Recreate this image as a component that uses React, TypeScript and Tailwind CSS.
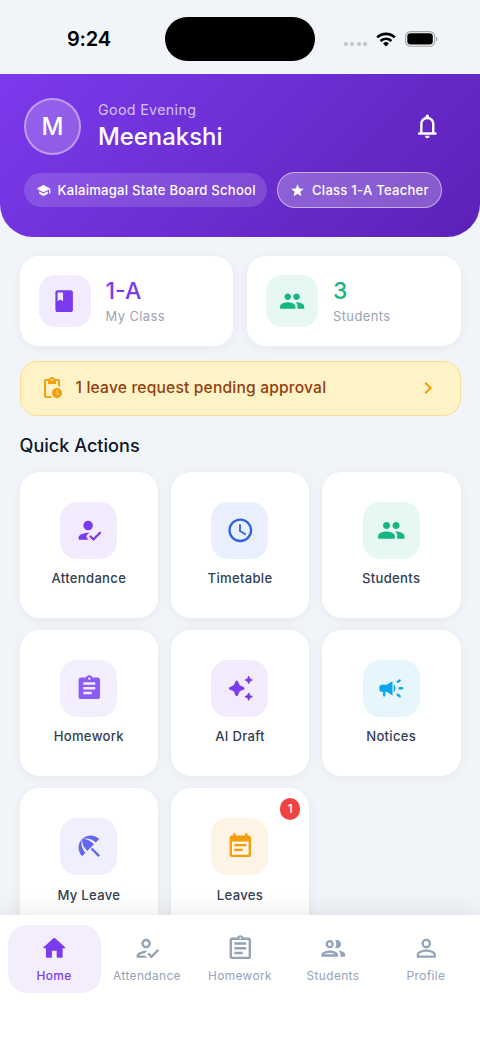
import React from "react";
import type { IconType } from "react-icons";
import {
    MdAssignment,
    MdBeachAccess,
    MdChevronRight,
    MdClass,
    MdEventNote,
    MdOutlineAssignment,
    MdOutlineGroup,
    MdOutlineHowToReg,
    MdPendingActions,
    MdPeople,
    MdPersonOutline,
    MdSchedule,
    MdStar,
} from "react-icons/md";

interface IconProps {
    className?: string;
}

type Icon = IconType | React.FC<IconProps>;

interface Action {
    label: string;
    icon: Icon;
    tint: string;
    badge?: number;
}

function HomeIcon({ className }: IconProps) {
    return (
        <svg className={className} viewBox="0 0 24 24" fill="currentColor">
            <path d="M10 19v-5h4v5c0 .55.45 1 1 1h3c.55 0 1-.45 1-1v-7h1.7c.46 0 .68-.57.33-.87L12.67 3.6c-.38-.34-.96-.34-1.34 0l-8.36 7.53c-.34.3-.13.87.33.87H5v7c0 .55.45 1 1 1h3c.55 0 1-.45 1-1z" />
        </svg>
    );
}

function SchoolIcon({ className }: IconProps) {
    return (
        <svg className={className} viewBox="0 0 24 24" fill="currentColor">
            <path d="M5 13.18v2.81c0 .73.4 1.41 1.04 1.76l5 2.73c.6.33 1.32.33 1.92 0l5-2.73c.64-.35 1.04-1.03 1.04-1.76v-2.81l-6.04 3.3c-.6.33-1.32.33-1.92 0L5 13.18zm6.04-9.66l-8.43 4.6c-.69.38-.69 1.38 0 1.76l8.43 4.6c.6.33 1.32.33 1.92 0L21 10.09V16c0 .55.45 1 1 1s1-.45 1-1V9.59c0-.37-.2-.7-.52-.88l-9.52-5.19c-.6-.32-1.32-.32-1.92 0z" />
        </svg>
    );
}

function BellIcon({ className }: IconProps) {
    return (
        <svg className={className} viewBox="0 0 24 24" fill="none" stroke="currentColor" strokeWidth="2">
            <path d="M7 18v-8a5 5 0 0 1 10 0v8" />
            <path d="M5.2 18h13.6" strokeLinecap="round" />
            <path d="M12 3.6v1" strokeWidth="2.8" strokeLinecap="round" />
            <path d="M10 20h4a2 2 0 0 1-4 0z" fill="currentColor" stroke="none" />
        </svg>
    );
}

function CheckUserIcon({ className }: IconProps) {
    return (
        <svg className={className} viewBox="0 0 24 24" fill="currentColor">
            <circle cx="11" cy="8" r="4" />
            <path d="M11 14c-2.67 0-8 1.34-8 4v1c0 .55.45 1 1 1h7.6l-1.4-1.4a2 2 0 0 1 0-2.8L12 14.06z" />
            <path d="M13 17.2l2.5 2.4 5.5-5.5" fill="none" stroke="currentColor" strokeWidth="1.9" strokeLinecap="round" />
        </svg>
    );
}

function SparkleIcon({ className }: IconProps) {
    return (
        <svg className={className} viewBox="0 0 24 24" fill="currentColor">
            <path d="M19.46 8l.79-1.75L22 5.46c.39-.18.39-.73 0-.91l-1.75-.79L19.46 2c-.18-.39-.73-.39-.91 0l-.79 1.75L16 4.54c-.39.18-.39.73 0 .91l1.75.79L18.54 8c.18.39.74.39.92 0zM11.5 9.5L9.91 6c-.35-.78-1.47-.78-1.82 0L6.5 9.5 3 11.09c-.78.36-.78 1.47 0 1.82l3.5 1.59L8.09 18c.36.78 1.47.78 1.82 0l1.59-3.5 3.5-1.59c.78-.36.78-1.47 0-1.82L11.5 9.5zM18.54 16l-.79 1.75-1.75.79c-.39.18-.39.73 0 .91l1.75.79.79 1.76c.18.39.73.39.91 0l.79-1.75 1.76-.79c.39-.18.39-.73 0-.91l-1.75-.79-.79-1.76c-.18-.39-.74-.39-.92 0z" />
        </svg>
    );
}

function CampaignIcon({ className }: IconProps) {
    return (
        <svg className={className} viewBox="0 0 24 24" fill="currentColor">
            <path d="M8 9H4c-1.1 0-2 .9-2 2v2c0 1.1.9 2 2 2h1v3c0 .55.45 1 1 1s1-.45 1-1v-3h1l5 3V6L8 9zM15.5 12c0-1.33-.58-2.53-1.5-3.35v6.69c.92-.81 1.5-2.01 1.5-3.34z" />
            <path d="M19 12h2M17.4 17.4l1.6 1.2M17.4 6.6L19 5.4" fill="none" stroke="currentColor" strokeWidth="2" strokeLinecap="round" />
        </svg>
    );
}

const actions: Action[] = [
    { label: "Attendance", icon: CheckUserIcon, tint: "bg-[#f2ebfd] text-[#7c3aed]" },
    { label: "Timetable", icon: MdSchedule, tint: "bg-[#e9effd] text-[#2f62e3]" },
    { label: "Students", icon: MdPeople, tint: "bg-[#e7f7f1] text-[#17b681]" },
    { label: "Homework", icon: MdAssignment, tint: "bg-[#f3effe] text-[#8b5cf6]" },
    { label: "AI Draft", icon: SparkleIcon, tint: "bg-[#f2ebfd] text-[#7c3aed]" },
    { label: "Notices", icon: CampaignIcon, tint: "bg-[#e7f6fd] text-[#0ea5e9]" },
    { label: "My Leave", icon: MdBeachAccess, tint: "bg-[#efeffe] text-[#6366f1]" },
    { label: "Leaves", icon: MdEventNote, tint: "bg-[#fef4e6] text-[#f59e0b]", badge: 1 },
];

const tabs: { label: string; icon: Icon }[] = [
    { label: "Home", icon: HomeIcon },
    { label: "Attendance", icon: MdOutlineHowToReg },
    { label: "Homework", icon: MdOutlineAssignment },
    { label: "Students", icon: MdOutlineGroup },
    { label: "Profile", icon: MdPersonOutline },
];

function StatusBar() {
    return (
        <div className="h-[74px] shrink-0 flex items-start pt-[16.5px]">
            <div className="w-[165px] h-[44px] flex items-center pl-[67px] text-[20px] font-semibold tracking-[-0.2px] text-black">9:24</div>
            <div className="w-[150px] h-[44px] rounded-full bg-black"></div>
            <div className="flex-1 h-[45px] flex items-center pl-[29px]">
                <div className="flex gap-[2.4px] mt-[10px]">
                    {[0, 1, 2, 3].map((i) => (
                        <span key={i} className="w-1 h-1 rounded-full bg-[#c0c3c6]"></span>
                    ))}
                </div>
                <svg className="ml-[9px] w-5 h-[15px]" viewBox="0 0 20 15" fill="none" stroke="#000" strokeWidth="2.7">
                    <path d="M1.2 5.4a12.6 12.6 0 0 1 17.6 0" />
                    <path d="M4.5 9a7.9 7.9 0 0 1 11 0" />
                    <path d="M10 14.5l-2.9-3a4.2 4.2 0 0 1 5.8 0z" fill="#000" stroke="none" />
                </svg>
                <svg className="ml-[9px] w-[33px] h-4" viewBox="0 0 33 16">
                    <rect x=".6" y=".6" width="29" height="14.6" rx="4.8" fill="none" stroke="#a3a6a9" strokeWidth="1.1" />
                    <rect x="2.3" y="2.3" width="25.5" height="11.2" rx="3.3" />
                    <path d="M31 5.5c2 .8 2 4 0 4.8z" fill="#a3a6a9" />
                </svg>
            </div>
        </div>
    );
}

function Header() {
    return (
        <div className="h-[162.5px] shrink-0 rounded-b-[33px] bg-[linear-gradient(135deg,#7c3aed,#5b21b6)] px-6 pt-6 text-white">
            <div className="flex items-center">
                <div className="w-[57px] h-[57px] rounded-full bg-white/20 border-2 border-white/40 flex items-center justify-center text-2xl font-medium">
                    M
                </div>
                <div className="ml-[17px] flex-1">
                    <p className="text-[14.3px] leading-[18px] tracking-[0.32px] text-white/70">Good Evening</p>
                    <h1 className="mt-[2px] text-[23.9px] leading-[32px] font-medium">Meenakshi</h1>
                </div>
                <BellIcon className="mr-[14.5px] w-[28.6px] h-[28.6px]" />
            </div>
            <div className="mt-[17px] flex items-center gap-[10px] text-[13.1px] font-medium tracking-[0.24px] whitespace-nowrap">
                <div className="h-[34px] w-[243px] rounded-full bg-white/15 flex items-center pl-3">
                    <SchoolIcon className="w-[15px] h-[15px] mr-[6.5px]" />
                    <span className="pt-[2px]">Kalaimagal State Board School</span>
                </div>
                <div className="h-9 w-[165px] rounded-full bg-white/25 border border-white/50 flex items-center pl-3">
                    <MdStar className="w-[15px] h-[15px] mr-[7px]" />
                    <span className="pt-[2px]">Class 1-A Teacher</span>
                </div>
            </div>
        </div>
    );
}

interface StatProps {
    value: string;
    label: string;
    icon: Icon;
    tint: string;
    color: string;
}

function StatCard({ value, label, icon: Icon, tint, color }: StatProps) {
    return (
        <div className="h-[90.5px] rounded-[19px] bg-white shadow-[0_2px_12px_rgba(0,0,0,0.05)] flex items-center pl-[19px]">
            <div className={`w-[52px] h-[52px] rounded-[16px] flex items-center justify-center ${tint}`}>
                <Icon className="w-[26.3px] h-[26.3px]" />
            </div>
            <div className="ml-[15px]">
                <p className={`text-[23px] leading-[28px] font-medium ${color}`}>{value}</p>
                <p className="mt-[3px] text-[12.9px] leading-[18px] tracking-[0.44px] text-[#9ca3b5]">{label}</p>
            </div>
        </div>
    );
}

function ActionCard({ label, icon: Icon, tint, badge }: Action) {
    return (
        <div className="relative h-[146px] rounded-[20px] bg-white shadow-[0_2px_12px_rgba(0,0,0,0.05)] flex flex-col items-center pt-[30px]">
            <div className={`w-[57px] h-[57px] rounded-[17px] flex items-center justify-center ${tint}`}>
                <Icon className="w-[28.6px] h-[28.6px]" />
            </div>
            <p className="mt-[9.7px] text-[13.1px] leading-[20px] font-medium tracking-[0.3px] text-[#334155]">{label}</p>
            {badge && (
                <span className="absolute top-[10px] right-[9px] w-5 h-[22px] rounded-full bg-[#ef4444] text-white text-[12px] font-medium flex items-center justify-center">
                    {badge}
                </span>
            )}
        </div>
    );
}

export default function App() {
    return (
        <div className="w-[480px] h-[1043px] overflow-hidden flex flex-col bg-[#f1f5f9] font-[Inter,sans-serif]">
            <StatusBar />
            <Header />

            {/* CONTENT */}
            <div className="flex-1 min-h-0 overflow-hidden px-[19.5px] pt-[19.3px]">
                <div className="grid grid-cols-2 gap-[14px]">
                    <StatCard value="1-A" label="My Class" icon={MdClass} tint="bg-[#f2ebfd] text-[#7c3aed]" color="text-[#7c3aed]" />
                    <StatCard value="3" label="Students" icon={MdPeople} tint="bg-[#e7f7f1] text-[#17b681]" color="text-[#17b681]" />
                </div>

                <div className="mt-[14.4px] h-[55px] rounded-[17px] bg-[#fef3c7] border-[1.5px] border-[#fbdc90] flex items-center pl-[19.5px] pr-[19.5px]">
                    <MdPendingActions className="w-6 h-6 text-[#f59e0b]" />
                    <p className="ml-[11.5px] flex-1 text-[15.6px] font-medium tracking-[0.18px] text-[#92400e]">1 leave request pending approval</p>
                    <MdChevronRight className="w-6 h-6 text-[#f59e0b]" />
                </div>

                <h2 className="mt-[16px] text-[18.1px] leading-[26px] font-medium text-[#0f172a]">Quick Actions</h2>

                <div className="mt-[13.9px] grid grid-cols-3 gap-x-[12.5px] gap-y-[12.2px]">
                    {actions.map((action) => (
                        <ActionCard key={action.label} {...action} />
                    ))}
                </div>
            </div>

            {/* BOTTOM NAV */}
            <div className="relative h-[128px] shrink-0 bg-white shadow-[0_-4px_24px_rgba(0,0,0,0.08)] px-[7.5px] pt-[9.5px] grid grid-cols-5">
                {tabs.map(({ label, icon: Icon }, i) => (
                    <div
                        key={label}
                        className={`h-[68px] rounded-[19px] flex flex-col items-center pt-[9.5px] ${i === 0 ? "bg-[#f4edfe] text-[#7c3aed] font-medium" : "text-[#94a3b8]"}`}
                    >
                        <Icon className="w-[28.6px] h-[28.6px]" />
                        <span className="mt-[4px] text-[11.9px] leading-[17px] tracking-[0.38px]">{label}</span>
                    </div>
                ))}
            </div>
        </div>
    );
}
